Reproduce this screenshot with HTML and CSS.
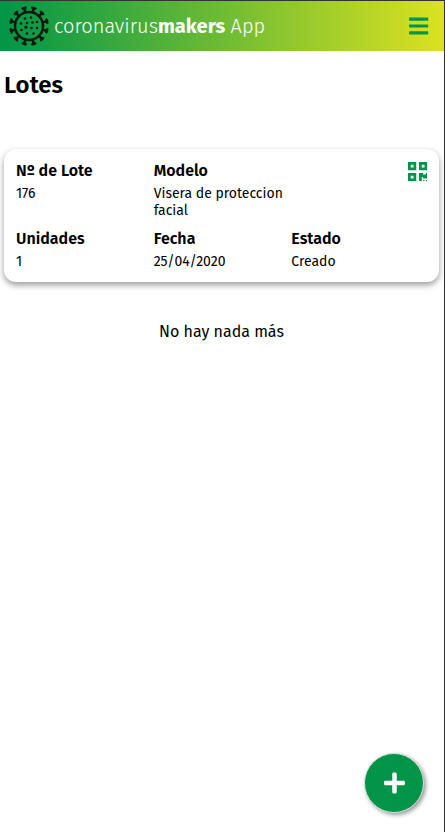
FILE: index.html
```html
<!DOCTYPE html>
<html lang="es">
<head>
    <meta charset="UTF-8">
    <meta name="viewport" content="width=device-width, initial-scale=1.0">
    <title>coronavirusmakers App</title>
    <link rel="stylesheet" href="styles.css">
</head>
<body>
    <div class="app">
        <header class="header">
            <svg class="logo" viewBox="-20 -20 40 40">
                <defs>
                    <path id="spike" d="M0 -14V-18.3M-2.5 -18.1Q0 -19.3 2.5 -18.1"/>
                </defs>
                <g fill="none" stroke="#0b1a10" stroke-width="2.5">
                    <circle r="14"/>
                    <use href="#spike" transform="rotate(15)"/>
                    <use href="#spike" transform="rotate(45)"/>
                    <use href="#spike" transform="rotate(75)"/>
                    <use href="#spike" transform="rotate(105)"/>
                    <use href="#spike" transform="rotate(135)"/>
                    <use href="#spike" transform="rotate(165)"/>
                    <use href="#spike" transform="rotate(195)"/>
                    <use href="#spike" transform="rotate(225)"/>
                    <use href="#spike" transform="rotate(255)"/>
                    <use href="#spike" transform="rotate(285)"/>
                    <use href="#spike" transform="rotate(315)"/>
                    <use href="#spike" transform="rotate(345)"/>
                </g>
                <g fill="#0b1a10">
                    <circle cx="-4" cy="-7.5" r="1.3"/>
                    <circle cx="2" cy="-8.5" r="1.3"/>
                    <circle cx="-8" cy="-2.5" r="1.3"/>
                    <circle cx="-2" cy="-3" r="1.3"/>
                    <circle cx="3.5" cy="-3.5" r="1.3"/>
                    <circle cx="8" cy="-4" r="1.3"/>
                    <circle cx="-3" cy="1.2" r="1.6"/>
                    <circle cx="2.5" cy="2" r="1.3"/>
                    <circle cx="8" cy="2" r="1.3"/>
                    <circle cx="-7.5" cy="4" r="1.3"/>
                    <circle cx="-2" cy="7.5" r="1.3"/>
                    <circle cx="4.5" cy="7.5" r="1.3"/>
                </g>
            </svg>
            <div class="brand">
                <span>coronavirus</span><strong>makers</strong><span class="brand-app">App</span>
            </div>
            <svg class="menu" viewBox="0 0 448 512">
                <path d="M16 132h416c8.837 0 16-7.163 16-16V76c0-8.837-7.163-16-16-16H16C7.163 60 0 67.163 0 76v40c0 8.837 7.163 16 16 16zm0 160h416c8.837 0 16-7.163 16-16v-40c0-8.837-7.163-16-16-16H16c-8.837 0-16 7.163-16 16v40c0 8.837 7.163 16 16 16zm0 160h416c8.837 0 16-7.163 16-16v-40c0-8.837-7.163-16-16-16H16c-8.837 0-16 7.163-16 16v40c0 8.837 7.163 16 16 16z"/>
            </svg>
        </header>

        <main>
            <h1>Lotes</h1>
            <div class="card">
                <div class="field">
                    <h2>Nº de Lote</h2>
                    <p>176</p>
                </div>
                <div class="field">
                    <h2>Modelo</h2>
                    <p>Visera de proteccion facial</p>
                </div>
                <div class="field field-qr">
                    <svg class="qr" viewBox="0 32 448 448">
                        <path d="M0 224h192V32H0v192zM64 96h64v64H64V96zm192-64v192h192V32H256zm128 128h-64V96h64v64zM0 480h192V288H0v192zm64-128h64v64H64v-64zm352-64h32v128h-96v-32h-32v96h-64V288h96v32h64v-32zm0 160h32v32h-32v-32zm-64 0h32v32h-32v-32z"/>
                    </svg>
                </div>
                <div class="field">
                    <h2>Unidades</h2>
                    <p>1</p>
                </div>
                <div class="field">
                    <h2>Fecha</h2>
                    <p>25/04/2020</p>
                </div>
                <div class="field">
                    <h2>Estado</h2>
                    <p>Creado</p>
                </div>
            </div>
            <p class="end">No hay nada más</p>
        </main>

        <button class="add" aria-label="Añadir">
            <svg viewBox="0 0 448 512">
                <path d="M416 208H272V64c0-17.67-14.33-32-32-32h-32c-17.67 0-32 14.33-32 32v144H32c-17.67 0-32 14.33-32 32v32c0 17.67 14.33 32 32 32h144v144c0 17.67 14.33 32 32 32h32c17.67 0 32-14.33 32-32V304h144c17.67 0 32-14.33 32-32v-32c0-17.67-14.33-32-32-32z"/>
            </svg>
        </button>
    </div>
</body>
</html>
```
FILE: styles.css
```css
* {
    box-sizing: border-box;
}
body {
    margin: 0;
    font-family: "Fira Sans", "Open Sans", "Noto Sans", sans-serif;
    color: #000;
    background-color: #fff;
}
h1, h2, p {
    margin: 0;
}
.app {
    height: 832px;
    border-top: 1px solid #333;
    border-right: 1px solid #333;
    overflow: hidden;
}
.header {
    display: flex;
    align-items: center;
    height: 50px;
    padding: 0 15.5px 0 9px;
    background: linear-gradient(to right, #009548, #dce220);
    color: #fff;
}
.logo {
    width: 40px;
    height: 40px;
}
.brand {
    display: flex;
    margin-left: 5px;
    font-size: 20px;
    line-height: 28px;
    font-weight: 300;
}
.brand strong {
    font-weight: 700;
}
.brand-app {
    margin-left: 5.5px;
}
.menu {
    width: 19.25px;
    height: 22px;
    margin-left: auto;
    fill: #009548;
}
main {
    padding: 0 5px 0 4px;
}
h1 {
    height: 98px;
    padding-top: 17px;
    font-size: 24px;
    line-height: 34px;
    font-weight: 600;
}
.card {
    display: grid;
    grid-template-columns: repeat(3, 137.67px);
    grid-template-rows: 68px auto;
    height: 133px;
    padding: 11px 10px 0 12px;
    border-radius: 12px;
    box-shadow: 0 3px 6px rgba(0, 0, 0, 0.4);
}
.field h2 {
    font-size: 16px;
    line-height: 22px;
    font-weight: 600;
}
.field p {
    font-size: 14px;
    line-height: 17px;
    margin-top: 3px;
}
.field-qr {
    display: flex;
    justify-content: flex-end;
    padding: 2px 2px 0 0;
}
.qr {
    width: 19.25px;
    height: 19.25px;
    fill: #009548;
}
.end {
    margin-top: 38px;
    font-size: 16px;
    line-height: 24px;
    text-align: center;
}
.add {
    position: fixed;
    right: 21px;
    bottom: 19px;
    display: flex;
    align-items: center;
    justify-content: center;
    width: 60px;
    height: 60px;
    padding: 0;
    border: 1px solid #d5ddd8;
    border-radius: 50%;
    background-color: #009548;
    box-shadow: 2px 2px 4px rgba(0, 0, 0, 0.4);
}
.add svg {
    width: 21px;
    height: 24px;
    fill: #fff;
}
```
